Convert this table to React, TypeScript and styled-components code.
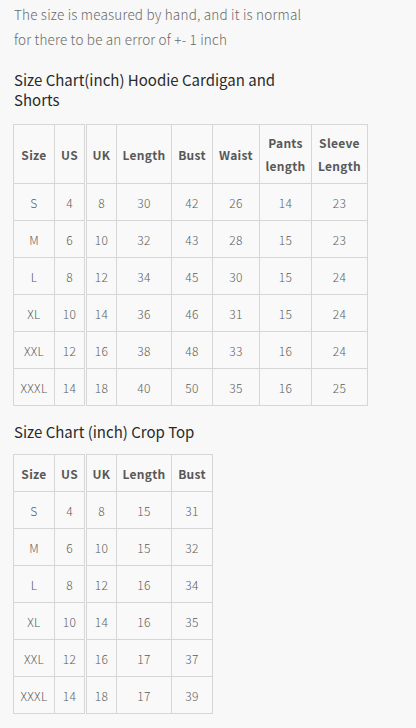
import React from "react";
import styled, { createGlobalStyle } from "styled-components";

const Global = createGlobalStyle`
  html, body { margin: 0; padding: 0; background: #f8f8f8; }
  body { font-family: "Noto Sans CJK SC", "Noto Sans", sans-serif; }
`;

const Page = styled.div`
  padding: 2px 13px 14px 14px;
  display: flex;
  flex-direction: column;
  align-items: flex-start;
`;

const Note = styled.p`
  margin: 0;
  font-size: 13.5px;
  line-height: 25px;
  font-weight: 300;
  letter-spacing: 0.2px;
  color: #6a6a6a;
`;

const Heading = styled.h3<{ $mt: number }>`
  margin: ${(p) => p.$mt}px 0 0 0;
  font-size: 15px;
  line-height: 20px;
  font-weight: 400;
  letter-spacing: 0;
  color: #2a2a2a;
`;

const Table = styled.table<{ $mt: number }>`
  margin-top: ${(p) => p.$mt}px;
  margin-left: -1px;
  border-collapse: collapse;
  table-layout: fixed;
  background: #f9f9f9;
`;

const Col = styled.col<{ $w: number }>`
  width: ${(p) => p.$w}px;
`;

const Th = styled.th<{ $double?: boolean; $h: number }>`
  height: ${(p) => p.$h - 1}px;
  padding: 0;
  border: 1px solid #d6d6d6;
  border-left: ${(p) => (p.$double ? "3px double #d6d6d6" : "1px solid #d6d6d6")};
  font-size: 12px;
  font-weight: 700;
  letter-spacing: 0.3px;
  line-height: 23px;
  color: #585858;
  text-align: center;
  vertical-align: middle;
`;

const Td = styled.td<{ $double?: boolean }>`
  height: 36px;
  padding: 0;
  border: 1px solid #d6d6d6;
  border-left: ${(p) => (p.$double ? "3px double #d6d6d6" : "1px solid #d6d6d6")};
  font-size: 12px;
  font-weight: 300;
  letter-spacing: 0.3px;
  color: #5c5c5c;
  text-align: center;
  vertical-align: middle;
`;

type Chart = {
  widths: number[];
  headers: React.ReactNode[];
  headerHeight: number;
  rows: (string | number)[][];
};

const hoodie: Chart = {
  widths: [41, 31, 31, 55, 41, 47, 52, 56],
  headerHeight: 59,
  headers: [
    "Size",
    "US",
    "UK",
    "Length",
    "Bust",
    "Waist",
    <>Pants<br />length</>,
    <>Sleeve<br />Length</>,
  ],
  rows: [
    ["S", 4, 8, 30, 42, 26, 14, 23],
    ["M", 6, 10, 32, 43, 28, 15, 23],
    ["L", 8, 12, 34, 45, 30, 15, 24],
    ["XL", 10, 14, 36, 46, 31, 15, 24],
    ["XXL", 12, 16, 38, 48, 33, 16, 24],
    ["XXXL", 14, 18, 40, 50, 35, 16, 25],
  ],
};

const crop: Chart = {
  widths: [41, 31, 31, 55, 41],
  headerHeight: 37,
  headers: ["Size", "US", "UK", "Length", "Bust"],
  rows: [
    ["S", 4, 8, 15, 31],
    ["M", 6, 10, 15, 32],
    ["L", 8, 12, 16, 34],
    ["XL", 10, 14, 16, 35],
    ["XXL", 12, 16, 17, 37],
    ["XXXL", 14, 18, 17, 39],
  ],
};

function SizeTable({ chart, mt }: { chart: Chart; mt: number }) {
  return (
    <Table $mt={mt}>
      <colgroup>
        {chart.widths.map((w, i) => (
          <Col key={i} $w={w} />
        ))}
      </colgroup>
      <thead>
        <tr>
          {chart.headers.map((h, i) => (
            <Th key={i} $double={i === 2} $h={chart.headerHeight}>
              {h}
            </Th>
          ))}
        </tr>
      </thead>
      <tbody>
        {chart.rows.map((r, ri) => (
          <tr key={ri}>
            {r.map((c, ci) => (
              <Td key={ci} $double={ci === 2}>
                {c}
              </Td>
            ))}
          </tr>
        ))}
      </tbody>
    </Table>
  );
}

export default function App() {
  return (
    <>
      <Global />
      <Page>
        <Note>
          The size is measured by hand, and it is normal
          <br />
          for there to be an error of +- 1 inch
        </Note>
        <Heading $mt={18}>
          Size Chart(inch) Hoodie Cardigan and
          <br />
          Shorts
        </Heading>
        <SizeTable chart={hoodie} mt={14} />
        <Heading $mt={16}>Size Chart (inch) Crop Top</Heading>
        <SizeTable chart={crop} mt={12} />
      </Page>
    </>
  );
}
